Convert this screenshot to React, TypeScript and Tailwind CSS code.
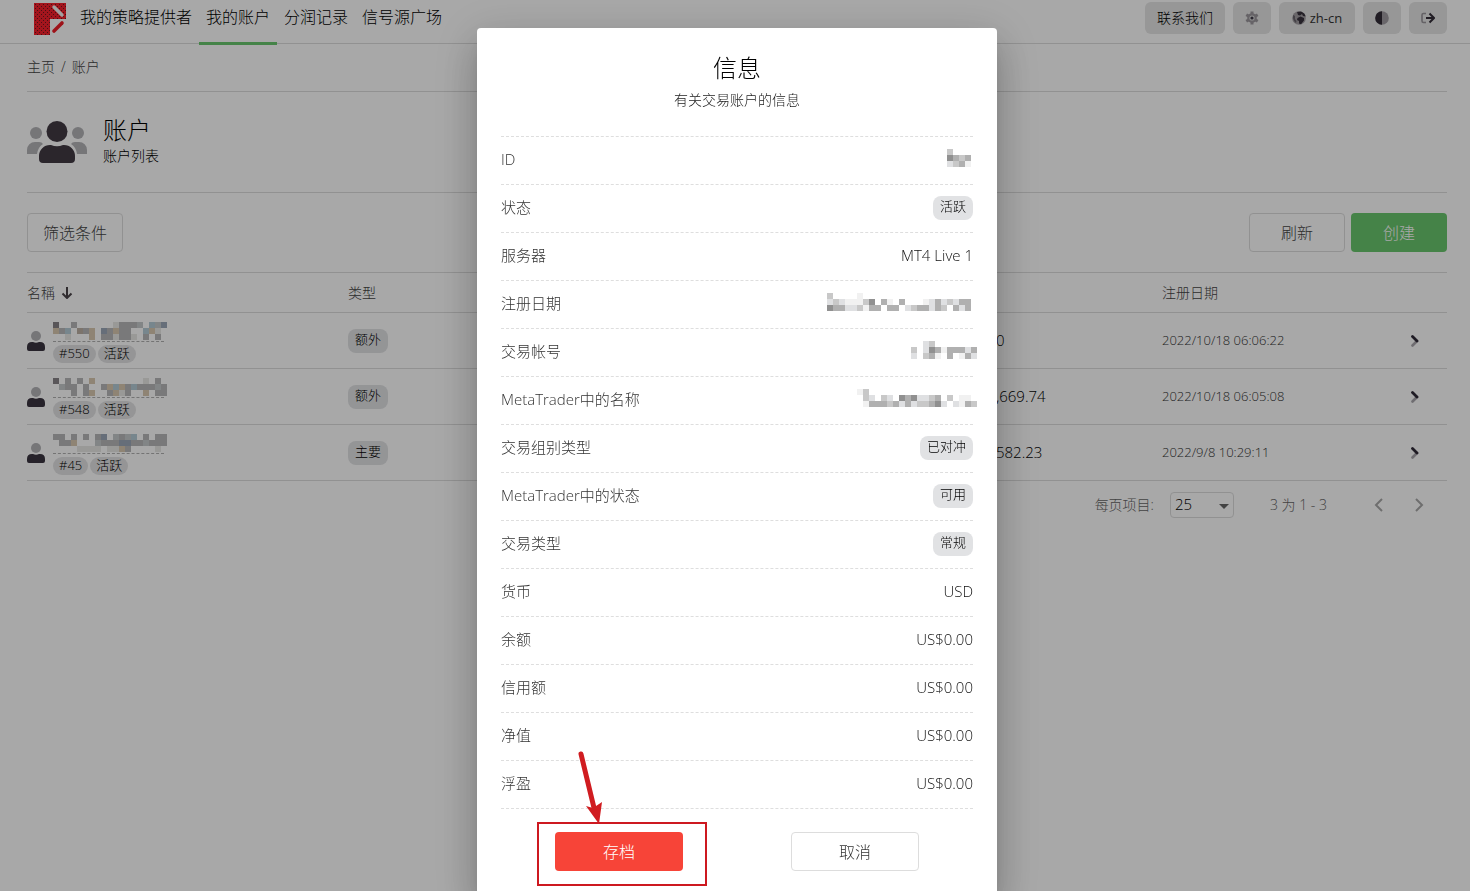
import type { ReactNode } from 'react';

const accounts = [
  {
    id: '#550',
    type: '额外',
    balance: '0',
    date: '2022/10/18 06:06:22',
    name: ['k  g      lggga ban', 'tgb ogt ngtgg  btl ', '  l   t gglggl g g '],
  },
  {
    id: '#548',
    type: '额外',
    balance: ',669.74',
    date: '2022/10/18 06:05:08',
    name: ['k g g t        l g ', ' agg g  gtbtgbgggag', '   g gt  gtlg  t gg'],
  },
  {
    id: '#45',
    type: '主要',
    balance: '582.23',
    date: '2022/9/8 10:29:11',
    name: ['gg g g gn agab g gg', ' ggt   agggnnggaggg', '    llll lltg    l '],
  },
];

const shades: Record<string, string> = {
  k: '#888388',
  g: '#b8b8ba',
  a: '#c6cacc',
  l: '#e8e8e6',
  t: '#d9c9b0',
  o: '#bdb0a4',
  b: '#b5cbd6',
  n: '#9ca7b8',
  '1': '#f1f1f1',
  '2': '#dfe0e2',
  '3': '#c8c8c8',
  '4': '#b0b0b0',
  '5': '#909090',
};

function Mosaic({ rows, className }: { rows: string[]; className?: string }) {
  const width = rows[0].length * 6;
  return (
    <svg
      width={width}
      height="18"
      viewBox={`0 0 ${width} 18`}
      shapeRendering="crispEdges"
      className={className}
      aria-hidden="true"
    >
      {rows.map((row, y) =>
        row
          .split('')
          .map((cell, x) =>
            cell === ' ' ? null : (
              <rect key={`${x}-${y}`} x={x * 6} y={y * 6} width="6" height="6" fill={shades[cell]} />
            ),
          ),
      )}
    </svg>
  );
}

function Badge({ children }: { children: ReactNode }) {
  return (
    <span className="flex h-6 w-fit items-center rounded-lg bg-[#e1e2e4] px-[7px] pb-0.5 text-[13px] font-light text-black">
      {children}
    </span>
  );
}

function Chip({ children }: { children: ReactNode }) {
  return (
    <span className="inline-flex h-[18px] items-center rounded-full bg-[#e3e3e4] px-[6px] text-[13px] font-light text-black">
      {children}
    </span>
  );
}

function Logo() {
  return (
    <svg width="32" height="32" viewBox="0 0 32 32" aria-hidden="true">
      <defs>
        <pattern id="dots" width="4" height="4" patternUnits="userSpaceOnUse">
          <rect width="4" height="4" fill="#f8202c" />
          <rect x="1" y="1" width="1" height="1" fill="#701820" />
          <rect x="3" y="3" width="1" height="1" fill="#701820" />
        </pattern>
      </defs>
      <path d="M0 0h32v16H16v16H0z" fill="url(#dots)" />
      <path d="M20 4l8 8" stroke="#f4f4f4" strokeWidth="3.4" strokeLinecap="round" />
      <path d="M20 28l8-8" stroke="#ef1c26" strokeWidth="3.6" strokeLinecap="round" />
    </svg>
  );
}

function UsersIcon() {
  return (
    <svg width="60" height="42" viewBox="0 0 60 42" aria-hidden="true">
      <g fill="#b3b3b7">
        <circle cx="9" cy="12" r="6" />
        <circle cx="51" cy="12" r="6" />
        <path d="M0 33v-4a8 8 0 0 1 8-8h4q3 0 4 2-5 3-6 10z" />
        <path d="M60 33v-4a8 8 0 0 0-8-8h-4q-3 0-4 2 5 3 6 10z" />
      </g>
      <g fill="#423a44">
        <circle cx="30" cy="10.500" r="10.500" />
        <path d="M12 38v-3a11 11 0 0 1 11-11h1q6 2.500 12 0h1a11 11 0 0 1 11 11v3q0 4-4 4H16q-4 0-4-4z" />
      </g>
    </svg>
  );
}

function UserIcon() {
  return (
    <svg width="18" height="20" viewBox="0 0 18 20" className="shrink-0" aria-hidden="true">
      <circle cx="9" cy="5" r="5" fill="#b3b3b7" />
      <path d="M0 18v-2q0-5 5-5h1q3 1.300 6 0h1q5 0 5 5v2q0 2-2 2H2q-2 0-2-2z" fill="#3a3440" />
    </svg>
  );
}

function GearIcon() {
  return (
    <svg width="14" height="14" viewBox="0 0 14 14" aria-hidden="true">
      <g stroke="#9b979d" strokeWidth="3">
        <path d="M7 .5v13M1.300 3.700l11.400 6.600M12.700 3.700L1.300 10.300" />
      </g>
      <circle cx="7" cy="7" r="4.800" fill="#9b979d" />
      <circle cx="7" cy="7" r="2.600" fill="#dcdcdc" />
      <circle cx="7" cy="7" r="1.600" fill="#3f3a48" />
    </svg>
  );
}

function GlobeIcon() {
  return (
    <svg width="14" height="14" viewBox="0 0 14 14" aria-hidden="true">
      <circle cx="7" cy="7" r="6.800" fill="#a19da2" />
      <path d="M5 1l4-.5q4 1.500 4.700 5L11 5 10 3 8 4.500 6 4z" fill="#39333e" />
      <path d="M5.500 7l3-1.500L12 7v2.500l-3 3.800-2-.8V10L5 9z" fill="#39333e" />
      <path d="M1 4l2 1v3l1.500 2-.5 2Q.5 9.500 1 4z" fill="#6a656d" />
    </svg>
  );
}

function ContrastIcon() {
  return (
    <svg width="14" height="14" viewBox="0 0 14 14" aria-hidden="true">
      <circle cx="7" cy="7" r="6.800" fill="#a09ca2" />
      <path d="M7 .2a6.800 6.800 0 0 0 0 13.600z" fill="#332d38" />
    </svg>
  );
}

function SignOutIcon() {
  return (
    <svg width="14" height="12" viewBox="0 0 14 12" fill="none" aria-hidden="true">
      <path d="M5 1.500H2.500Q1 1.500 1 3v6q0 1.500 1.500 1.500H5" stroke="#99959b" strokeWidth="1.600" />
      <path d="M5 6h7" stroke="#332d38" strokeWidth="2" />
      <path d="M8.500 1.500L13 6l-4.500 4.500" stroke="#332d38" strokeWidth="2" />
    </svg>
  );
}

function RowChevron() {
  return (
    <svg width="10" height="12" viewBox="0 0 10 12" fill="none" aria-hidden="true">
      <path d="M7 6l-4.500 4.500" stroke="#a9a6ac" strokeWidth="2.600" strokeLinecap="round" />
      <path d="M2.500 1.500L7 6" stroke="#2f2a38" strokeWidth="2.800" strokeLinecap="round" />
    </svg>
  );
}

function PageChevron({ d }: { d: string }) {
  return (
    <svg width="10" height="14" viewBox="0 0 10 14" fill="none" stroke="#a8a8a8" strokeWidth="2" aria-hidden="true">
      <path d={d} />
    </svg>
  );
}

const navLinks = ['我的策略提供者', '我的账户', '分润记录', '信号源广场'];

function Header() {
  const button = 'flex h-8 items-center justify-center gap-1 rounded-md bg-[#e5e5e5] text-sm font-light text-black';
  return (
    <header className="flex h-11 justify-between border-b border-[#dddddd] pl-[34px] pr-[23px]">
      <nav className="flex gap-[7px]">
        <a href="#" aria-label="首页" className="pt-[3px]">
          <Logo />
        </a>
        <div className="flex">
          {navLinks.map((label) => (
            <a
              key={label}
              href="#"
              className={`h-[45px] border-b-3 px-[7px] pt-[5px] text-base leading-6 font-light text-black ${
                label === '我的账户' ? 'border-[#6ac76e]' : 'border-transparent'
              }`}
            >
              {label}
            </a>
          ))}
        </div>
      </nav>
      <div className="flex gap-2 pt-0.5">
        <button className={`${button} w-20`}>联系我们</button>
        <button className={`${button} w-[38px]`} aria-label="设置">
          <GearIcon />
        </button>
        <button className={`${button} w-[76px]`}>
          <GlobeIcon />
          <span className="text-[13px] font-normal text-[#333]">zh-cn</span>
        </button>
        <button className={`${button} w-[38px]`} aria-label="主题">
          <ContrastIcon />
        </button>
        <button className={`${button} w-[38px]`} aria-label="退出">
          <SignOutIcon />
        </button>
      </div>
    </header>
  );
}

function AccountsTable() {
  return (
    <table className="w-full table-fixed border-collapse text-left">
      <colgroup>
        <col className="w-[321px]" />
        <col />
        <col className="w-[166px]" />
        <col className="w-[248px]" />
        <col className="w-[37px]" />
      </colgroup>
      <thead>
        <tr className="h-10 border-y border-[#dddddd] text-sm text-[#444]">
          <th className="p-0 font-light">
            <span className="flex items-center gap-1.5">
              名稱
              <svg width="12" height="12" viewBox="0 0 12 12" fill="none" stroke="#4a4448" strokeWidth="2" aria-hidden="true">
                <path d="M6 0v11M1.500 6.500L6 11l4.500-4.500" />
              </svg>
            </span>
          </th>
          <th className="p-0 font-light">类型</th>
          <th className="p-0" />
          <th className="p-0 font-light">注册日期</th>
          <th className="p-0" />
        </tr>
      </thead>
      <tbody>
        {accounts.map((account) => (
          <tr key={account.id} className="h-14 border-b border-[#dddddd]">
            <td className="p-0">
              <div className="flex items-center gap-2">
                <UserIcon />
                <div className="pt-1">
                  <div className="mb-[3px] flex h-5 w-[111px] border-b border-dashed border-[#b0b0b0]">
                    <Mosaic rows={account.name} className="shrink-0" />
                  </div>
                  <div className="flex gap-0.5">
                    <Chip>{account.id}</Chip>
                    <Chip>活跃</Chip>
                  </div>
                </div>
              </div>
            </td>
            <td className="p-0">
              <Badge>{account.type}</Badge>
            </td>
            <td className="p-0 text-[15px] font-light text-black">{account.balance}</td>
            <td className="p-0 text-[13px] font-light text-[#333]">{account.date}</td>
            <td className="p-0">
              <button className="block" aria-label="详情">
                <RowChevron />
              </button>
            </td>
          </tr>
        ))}
      </tbody>
    </table>
  );
}

function Pagination() {
  return (
    <div className="flex h-12 items-center justify-end pr-2 text-sm font-light text-[#666]">
      <label htmlFor="page-size" className="mr-4">
        每页项目:
      </label>
      <div className="relative mr-9">
        <select
          id="page-size"
          defaultValue="25"
          className="h-[26px] w-16 appearance-none rounded border border-[#dddddd] pl-1 text-[15px] text-black"
        >
          <option value="25">25</option>
        </select>
        <svg
          width="10"
          height="5"
          viewBox="0 0 10 5"
          className="pointer-events-none absolute top-3 right-[5px]"
          aria-hidden="true"
        >
          <path d="M0 0h10L5 5z" fill="#666" />
        </svg>
      </div>
      <span className="mr-8">3 为 1 - 3</span>
      <button className="flex w-10 justify-center" aria-label="上一页">
        <PageChevron d="M8 1L2 7l6 6" />
      </button>
      <button className="flex w-10 justify-center" aria-label="下一页">
        <PageChevron d="M2 1l6 6-6 6" />
      </button>
    </div>
  );
}

const details: { label: string; value: ReactNode }[] = [
  { label: 'ID', value: <Mosaic rows={['3   ', '5434', '2341']} className="mr-0.5 mb-1" /> },
  { label: '状态', value: <Badge>活跃</Badge> },
  { label: '服务器', value: 'MT4 Live 1' },
  {
    label: '注册日期',
    value: (
      <Mosaic
        rows={['3    1                  ', '23211135 41 4   12423244', '544223144 44 2344243 424']}
        className="mr-0.5 mb-1"
      />
    ),
  },
  {
    label: '交易帐号',
    value: <Mosaic rows={['  23       ', '3 254144424', '2 341 4 142']} className="-mr-1 mb-1" />,
  },
  {
    label: 'MetaTrader中的名称',
    value: (
      <Mosaic
        rows={['13                  ', ' 32 32 5452234 3 11 ', ' 14443424233452 2143']}
        className="-mr-1 mb-1"
      />
    ),
  },
  { label: '交易组别类型', value: <Badge>已对冲</Badge> },
  { label: 'MetaTrader中的状态', value: <Badge>可用</Badge> },
  { label: '交易类型', value: <Badge>常规</Badge> },
  { label: '货币', value: 'USD' },
  { label: '余额', value: 'US$0.00' },
  { label: '信用额', value: 'US$0.00' },
  { label: '净值', value: 'US$0.00' },
  { label: '浮盈', value: 'US$0.00' },
];

function InfoDialog() {
  return (
    <div className="fixed inset-0 flex items-start justify-center overflow-hidden bg-black/34 pt-7 pl-1">
      <div
        role="dialog"
        aria-modal="true"
        aria-labelledby="info-title"
        className="w-full max-w-[520px] rounded bg-white px-6 pt-5 pb-6 shadow-[0_11px_15px_-7px_rgba(0,0,0,0.2),0_24px_38px_3px_rgba(0,0,0,0.14),0_9px_46px_8px_rgba(0,0,0,0.12)]"
      >
        <h2 id="info-title" className="text-center text-2xl leading-10 font-light text-black">
          信息
        </h2>
        <p className="text-center text-sm leading-6 font-light text-[#222]">有关交易账户的信息</p>
        <dl className="mt-6 border-t border-dashed border-[#dedede]">
          {details.map(({ label, value }) => (
            <div
              key={label}
              className="flex h-12 items-center justify-between border-b border-dashed border-[#dedede] pb-0.5 text-[15px] font-light"
            >
              <dt className="text-[#333]">{label}</dt>
              <dd className="text-[#111]">{value}</dd>
            </div>
          ))}
        </dl>
        <div className="mt-[23px] grid grid-cols-2 justify-items-center">
          <div className="relative">
            <button className="h-[39px] w-32 rounded bg-[#f74438] text-base font-light text-white">存档</button>
            <div className="pointer-events-none absolute -top-2.5 -right-6 -bottom-[15px] -left-[18px] border-2 border-[#cd1920]" />
            <svg
              width="32"
              height="76"
              viewBox="0 0 32 76"
              className="pointer-events-none absolute -top-[83px] left-5"
              aria-hidden="true"
            >
              <path d="M6 5l14 58" stroke="#d01c20" strokeWidth="5" strokeLinecap="round" />
              <path d="M11 57l7 2 9-6-3 22z" fill="#d01c20" />
            </svg>
          </div>
          <button className="h-[39px] w-32 rounded border border-[#dddddd] text-base font-light text-[#333]">取消</button>
        </div>
      </div>
    </div>
  );
}

export default function App() {
  return (
    <div className="min-h-screen bg-white font-['Open_Sans','Noto_Sans_CJK_SC',sans-serif]">
      <Header />
      <main className="pr-[23px] pl-[27px]">
        <div className="flex h-12 items-center gap-1.5 border-b border-[#dddddd] pb-0.5 text-sm font-light text-[#444]">
          <a href="#">主页</a>
          <span>/</span>
          <a href="#">账户</a>
        </div>
        <div className="flex h-[101px] items-center gap-4 border-b border-[#dddddd]">
          <UsersIcon />
          <div>
            <h1 className="text-2xl leading-7 font-light text-black">账户</h1>
            <p className="text-sm leading-6 font-light text-black">账户列表</p>
          </div>
        </div>
        <div className="flex gap-1.5 py-5 text-base font-light">
          <button className="h-[39px] w-24 rounded border border-[#dddddd] text-[#444]">筛选条件</button>
          <button className="ml-auto h-[39px] w-24 rounded border border-[#dddddd] text-[#444]">刷新</button>
          <button className="h-[39px] w-24 rounded bg-[#6ac76e] text-white">创建</button>
        </div>
        <AccountsTable />
        <Pagination />
      </main>
      <InfoDialog />
    </div>
  );
}
